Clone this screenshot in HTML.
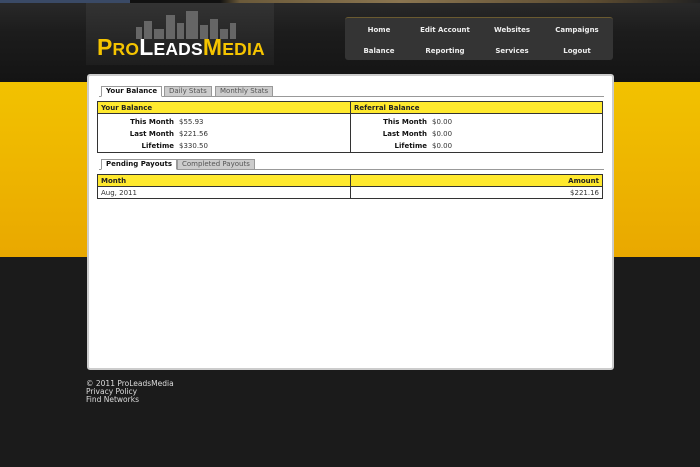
<!DOCTYPE html>
<html><head><style>
*{margin:0;padding:0;box-sizing:border-box}
body{width:700px;height:467px;overflow:hidden;background:#1b1b1b;font-family:"DejaVu Sans","Liberation Sans",sans-serif;font-size:7.5px;color:#333;position:relative}
.top{position:absolute;left:0;top:0;width:700px;height:82px;background:linear-gradient(#2a2a2a,#1c1c1c 40%,#141414)}
.strip{position:absolute;left:0;top:0;width:700px;height:3px;background:linear-gradient(90deg,#3a4a66 0,#3a4a66 130px,#111 130px,#111 220px,#6b5a3a 240px,#8a7550 400px,#5a4a30 600px,#222)}
.band{position:absolute;left:0;top:82px;width:700px;height:175px;background:linear-gradient(#f2c200,#e9a800)}
.logoarea{position:absolute;left:86px;top:3px;width:188px;height:62px;background:linear-gradient(#333,#1e1e1e)}
.city{position:absolute;left:50px;top:6px}
.logo{position:absolute;left:11px;top:31px;font-family:"Liberation Sans",sans-serif;font-weight:bold;font-size:23px;letter-spacing:0.2px;white-space:nowrap}
.logo .s{font-size:17.5px}
.logo .y{color:#f5c400}.logo .w{color:#fff}
.nav{position:absolute;left:345px;top:17px;width:268px;height:43px;background:#343434;border-top:1px solid #6a5a30;border-radius:3px}
.nav span{position:absolute;width:64px;text-align:center;color:#eee;font-weight:bold;font-size:7px}
.panel{position:absolute;left:87px;top:74px;width:527px;height:296px;background:#fff;border:2px solid #ccc;border-radius:3px}
.tabs{position:absolute;left:10px;height:11px;border-bottom:1px solid #999;width:505px}
.tab{position:absolute;top:0;height:11px;border:1px solid #999;background:#ccc;color:#555;font-size:7px;line-height:9px;padding:0 4px}
.tab.a{background:#fff;color:#111;font-weight:bold;border-bottom:1px solid #fff}
table{position:absolute;left:8px;width:506px;border-collapse:collapse;border:1px solid #333}
td{font-size:7px;padding:0 3px}
.h td{background:#ffe92e;font-weight:bold;color:#222;border:1px solid #333;height:12px}
.foot{position:absolute;left:86px;top:380px;color:#ddd;font-size:7.5px;line-height:8px}
</style></head><body>
<div class="top"></div><div class="strip"></div>
<div class="band"></div>
<div class="logoarea">
<svg class="city" width="120" height="30" viewBox="0 0 120 30"><g fill="#666"><rect x="0" y="18" width="6" height="12"/><rect x="8" y="12" width="8" height="18"/><rect x="18" y="20" width="10" height="10"/><rect x="30" y="6" width="9" height="24"/><rect x="41" y="14" width="7" height="16"/><rect x="50" y="2" width="12" height="28"/><rect x="64" y="16" width="8" height="14"/><rect x="74" y="10" width="8" height="20"/><rect x="84" y="20" width="8" height="10"/><rect x="94" y="14" width="6" height="16"/></g></svg>
<div class="logo"><span class="y">P<span class="s">RO</span></span><span class="w">L<span class="s">EADS</span></span><span class="y">M<span class="s">EDIA</span></span></div>
</div>
<div class="nav">
<span style="left:2px;top:8px">Home</span><span style="left:68px;top:8px">Edit Account</span><span style="left:135px;top:8px">Websites</span><span style="left:200px;top:8px">Campaigns</span>
<span style="left:2px;top:29px">Balance</span><span style="left:68px;top:29px">Reporting</span><span style="left:135px;top:29px">Services</span><span style="left:200px;top:29px">Logout</span>
</div>
<div class="panel">
<div class="tabs" style="top:10px">
<div class="tab a" style="left:2px">Your Balance</div><div class="tab" style="left:65px">Daily Stats</div><div class="tab" style="left:116px">Monthly Stats</div></div>
<table style="top:25px">
<tr class="h"><td style="width:253px">Your Balance</td><td>Referral Balance</td></tr>
<tr><td style="border-right:1px solid #333;padding-top:2px;line-height:12px"><div style="display:flex"><div style="width:73px;text-align:right;font-weight:bold;color:#111">This Month<br>Last Month<br>Lifetime</div><div style="padding-left:5px">$55.93<br>$221.56<br>$330.50</div></div></td>
<td style="padding-top:2px;line-height:12px"><div style="display:flex"><div style="width:73px;text-align:right;font-weight:bold;color:#111">This Month<br>Last Month<br>Lifetime</div><div style="padding-left:5px">$0.00<br>$0.00<br>$0.00</div></div></td></tr>
</table>
<div class="tabs" style="top:83px">
<div class="tab a" style="left:2px">Pending Payouts</div><div class="tab" style="left:78px">Completed Payouts</div></div>
<table style="top:98px">
<tr class="h"><td style="width:253px">Month</td><td style="text-align:right">Amount</td></tr>
<tr><td style="border-right:1px solid #333;height:12px">Aug, 2011</td><td style="text-align:right">$221.16</td></tr>
</table>
</div>
<div class="foot">© 2011 ProLeadsMedia<br>Privacy Policy<br>Find Networks</div>
</body></html>
